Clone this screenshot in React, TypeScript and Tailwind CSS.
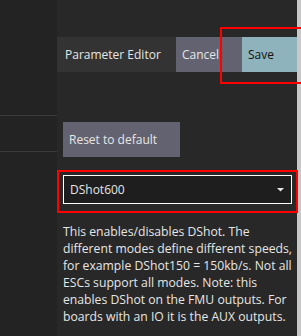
import React from 'react';

const font = { fontFamily: '"Open Sans", "Noto Sans", sans-serif' };

export default function App() {
    return (
        <div className="relative flex w-[301px] h-[336px] bg-[#282828] overflow-hidden" style={font}>
            {/* Left list panel */}
            <div className="w-[57px] shrink-0 bg-[#232323] flex flex-col">
                <div className="h-[116px] border-b border-[#3a3a3a]" />
                <div className="h-[36px] border-b border-[#3a3a3a]" />
            </div>

            {/* Editor */}
            <div className="flex-1 flex flex-col pt-[37px]">
                <div className="flex h-[35px] text-[12px]">
                    <div className="w-[119px] bg-[#333333] text-[#e6e6e6] flex items-center pl-[8px]">Parameter Editor</div>
                    <div className="w-[66px] bg-[#636270] text-[#e6e6e6] flex items-center pl-[6px]">Cancel</div>
                    <div className="flex-1 bg-[#8fb3bd] text-[#111] flex items-center pl-[6px]">Save</div>
                </div>

                <div className="pl-[6px] pr-[5px]">
                    <button className="mt-[50px] w-[117px] h-[35px] bg-[#636270] text-[#e6e6e6] text-[12px] text-left pl-[6px]">
                        Reset to default
                    </button>

                    <div className="mt-[18px] h-[29px] border border-white bg-[#1e1e1e] flex items-center justify-between pl-[6px] pr-[7px] text-[12px] text-[#e6e6e6]">
                        <span>DShot600</span>
                        <svg width="7" height="4" viewBox="0 0 7 4"><path d="M0 0h7L3.5 3.5z" fill="#e6e6e6" /></svg>
                    </div>

                    <p className="mt-[19px] text-[12.2px] leading-[17px] text-[#e6e6e6]">
                        This enables/disables DShot. The different modes define different speeds, for example DShot150 = 150kb/s. Not all ESCs support all modes. Note: this enables DShot on the FMU outputs. For boards with an IO it is the AUX outputs.
                    </p>
                </div>
            </div>

            {/* Scrollbar */}
            <div className="w-[4px] shrink-0 bg-[#c8c8c8]" />

            {/* Highlight boxes */}
            <div className="absolute left-[220px] top-[27px] w-[90px] h-[57px] border-2 border-[#ff0000]" />
            <div className="absolute left-[57px] top-[170px] w-[241px] h-[43px] border-2 border-[#ff0000]" />
        </div>
    );
}
